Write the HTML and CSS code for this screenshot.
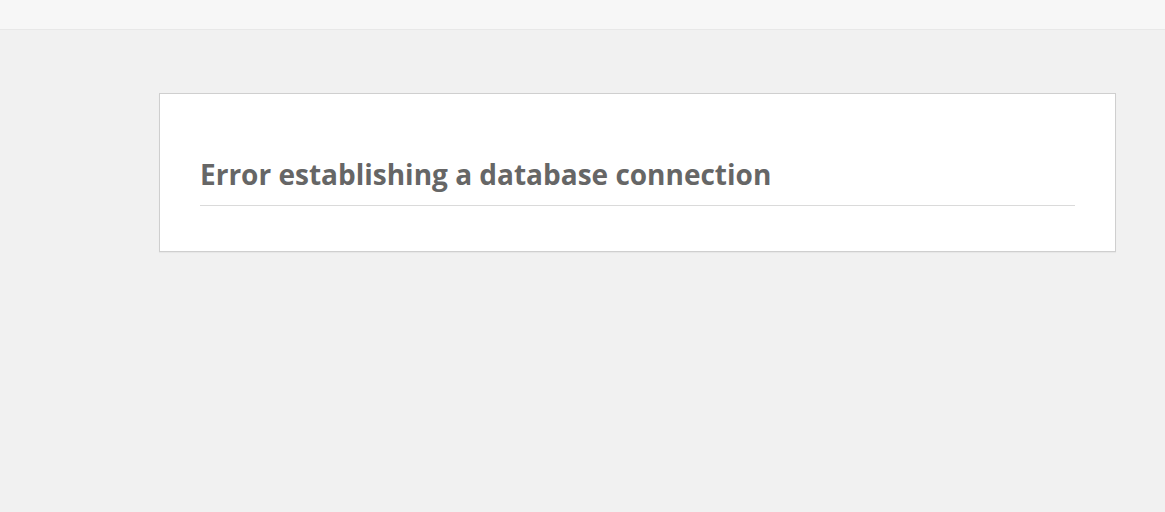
FILE: index.html
```html
<!DOCTYPE html>
<html lang="en">
<head>
<meta charset="utf-8">
<title>Database Error</title>
<link rel="stylesheet" href="styles.css">
</head>
<body>
<div class="topbar"></div>
<main class="wrap">
  <div class="card">
    <h1 class="title"><span class="title-text">Error establishing a database connection</span></h1>
  </div>
</main>
</body>
</html>
```
FILE: styles.css
```css
html, body {
  margin: 0;
  padding: 0;
}
body {
  background: #f1f1f1;
  font-family: "Open Sans", "Noto Sans", sans-serif;
  min-height: 512px;
}
.topbar {
  height: 29px;
  background: #f7f7f7;
  border-bottom: 1px solid #e8e8e8;
}
.wrap {
  padding: 63px 49px 0 159px;
}
.card {
  background: #fff;
  border: 1px solid #cfcfcf;
  box-shadow: 0 1px 1px rgba(0,0,0,.04);
  padding: 63px 40px 45px;
}
.title {
  margin: 0;
  color: #666;
  font-size: 28px;
  font-weight: 700;
  line-height: 34px;
  padding-bottom: 14px;
  border-bottom: 1px solid #dadada;
}
```
